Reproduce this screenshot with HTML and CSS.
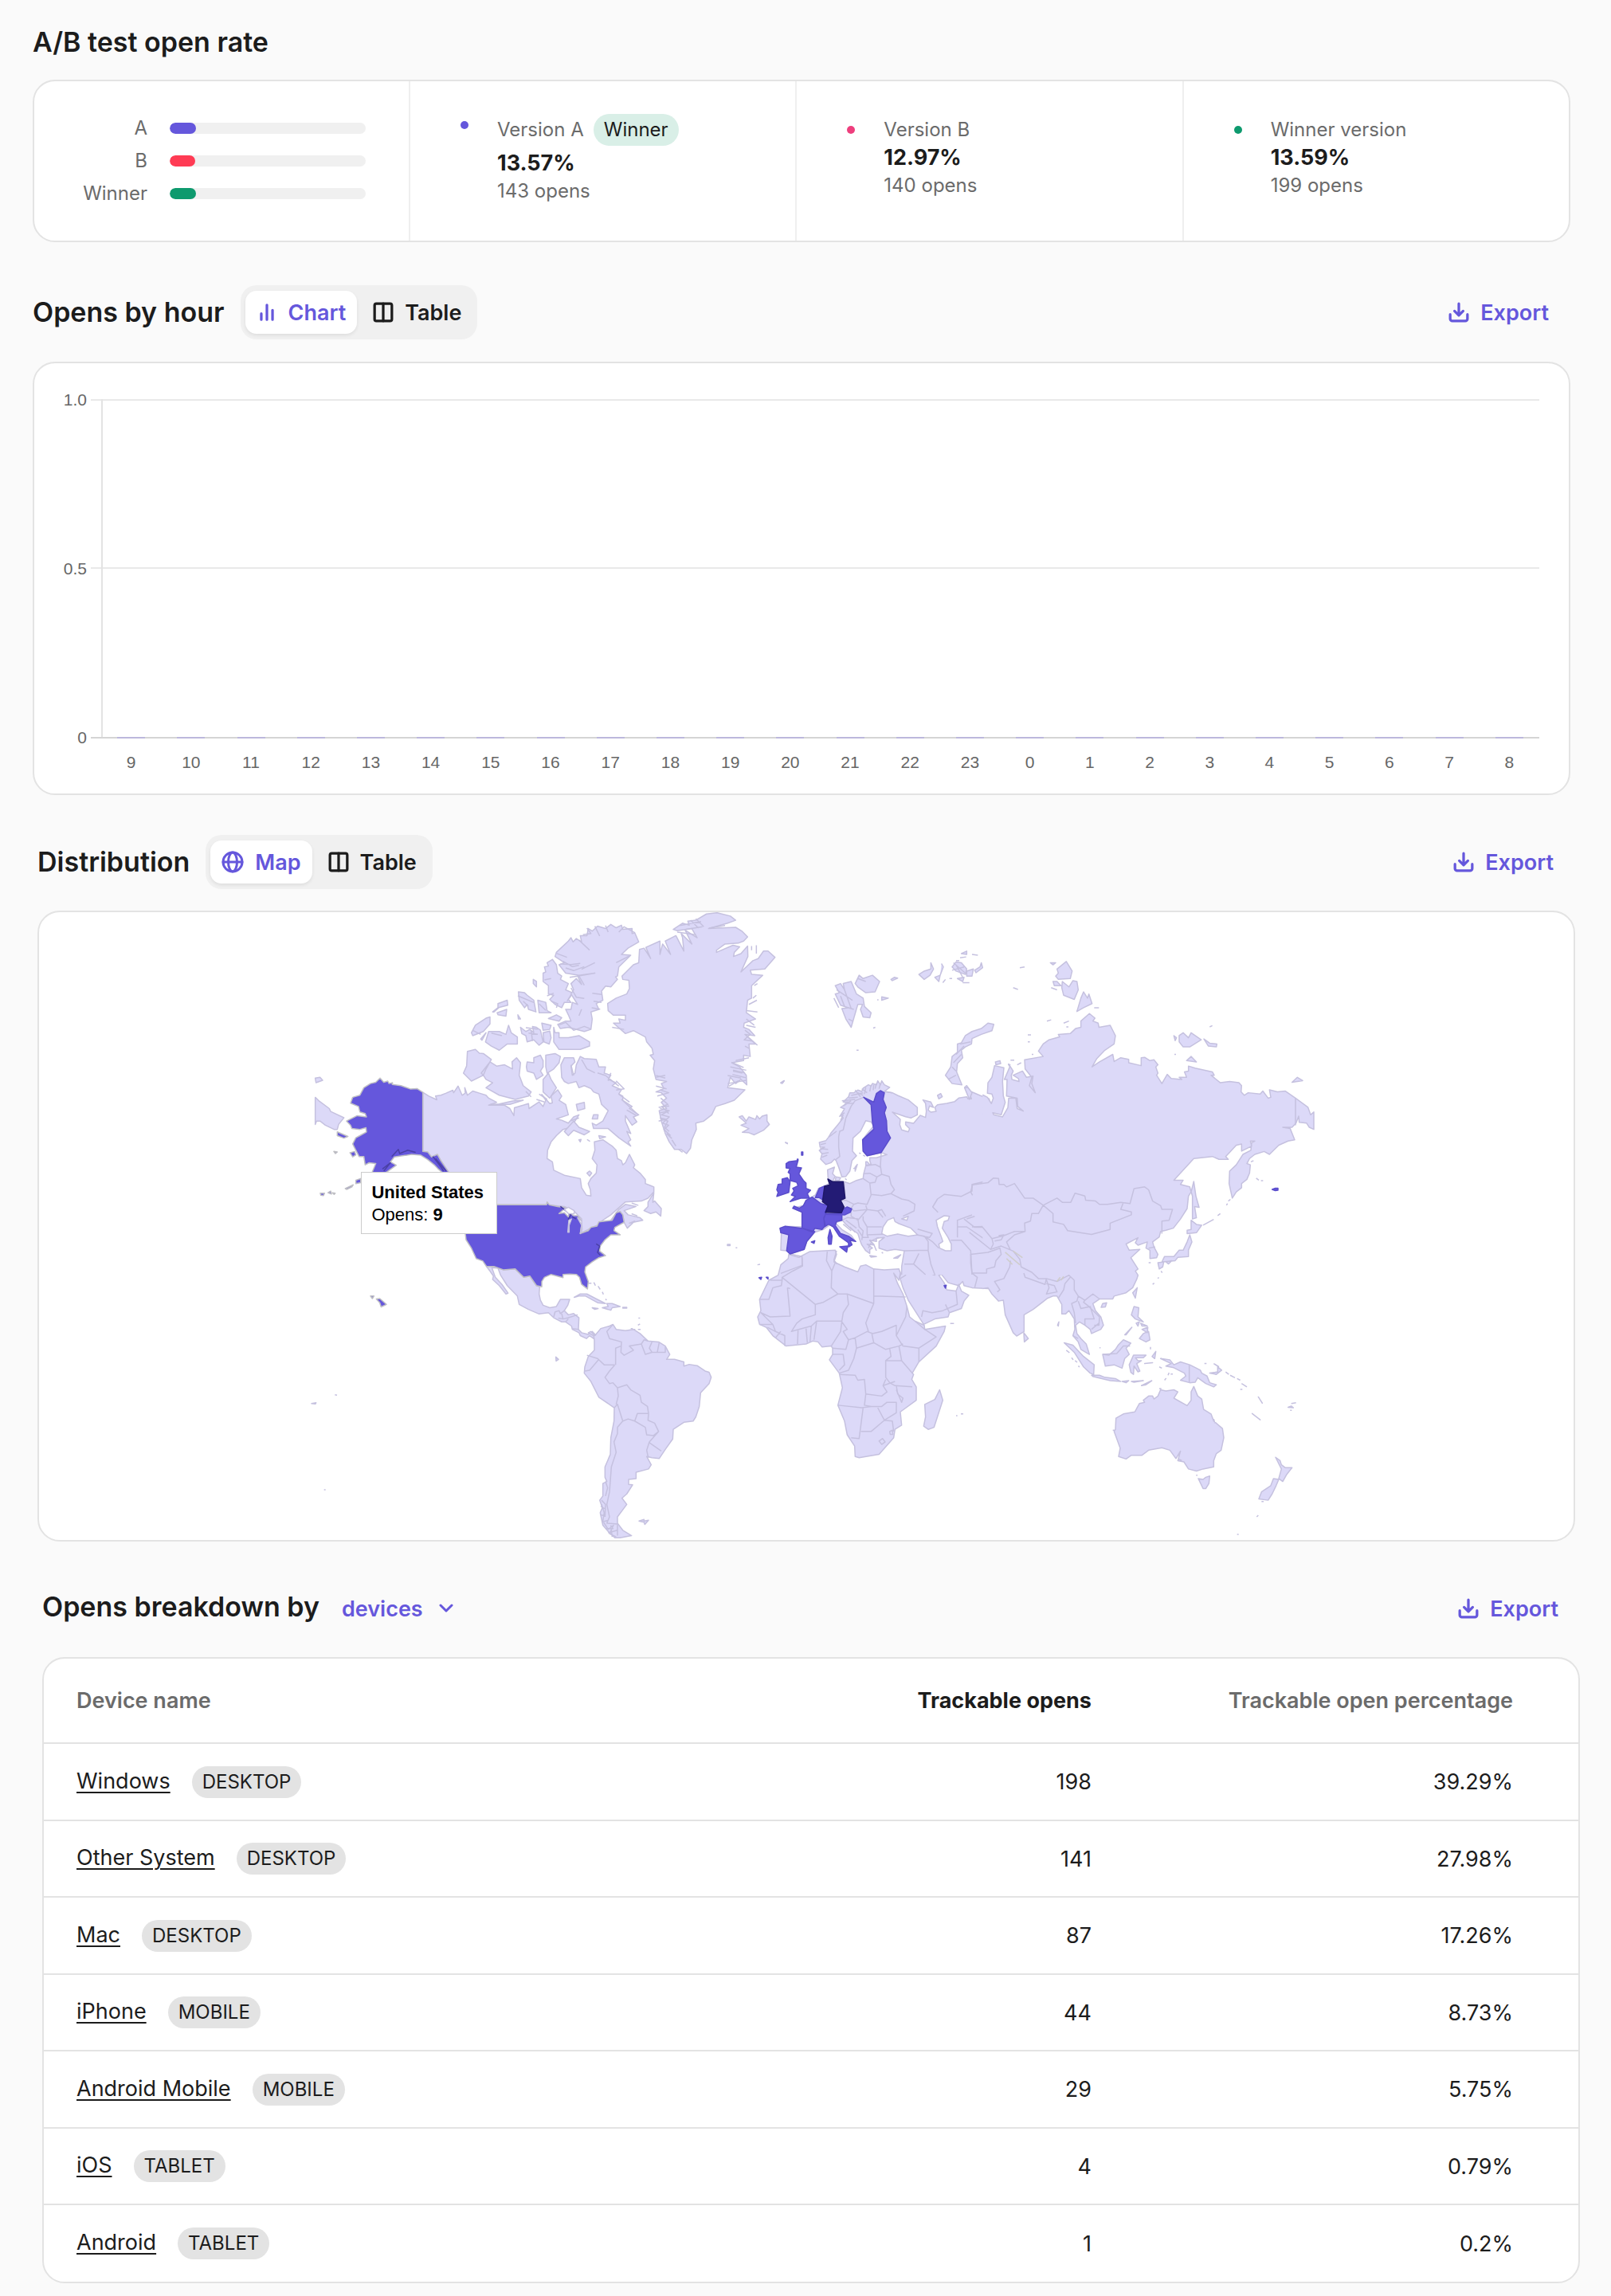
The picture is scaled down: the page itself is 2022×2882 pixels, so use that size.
FILE: index.html
```html
<!DOCTYPE html>
<html lang="en">
<head>
    <meta charset="UTF-8">
    <meta name="viewport" content="width=device-width, initial-scale=1.0">
    <title>Campaign report</title>
    <link rel="stylesheet" href="styles.css">
</head>
<body>

<!-- shared icons -->
<svg width="0" height="0" class="sprite" aria-hidden="true">
    <symbol id="icon-export" viewBox="0 0 24 24">
        <path d="M12 2v13M7 10.5l5 5 5-5M2 14.5v5a2.500 2.500 0 0 0 2.500 2.500h15a2.500 2.500 0 0 0 2.500-2.500v-5"/>
    </symbol>
    <symbol id="icon-table" viewBox="0 0 24 24">
        <rect x="2" y="2" width="20" height="20" rx="2"/>
        <path d="M12 2v20"/>
    </symbol>
    <symbol id="icon-chart" viewBox="0 0 24 24">
        <path d="M5.500 13.500v7M12 3.500v17M18.500 9.500v11"/>
    </symbol>
    <symbol id="icon-globe" viewBox="0 0 28 28">
        <circle cx="14" cy="14" r="12"/>
        <ellipse cx="14" cy="14" rx="5.500" ry="12"/>
        <path d="M2 14h24"/>
    </symbol>
</svg>

<section class="section">
    <h2 class="first-title">A/B test open rate</h2>
    <div class="card ab">
        <div class="ab-bars">
            <span>A</span><div class="bar"><div class="fill purple" style="width: 13.57%"></div></div>
            <span>B</span><div class="bar"><div class="fill red" style="width: 12.97%"></div></div>
            <span>Winner</span><div class="bar"><div class="fill green" style="width: 13.59%"></div></div>
        </div>
        <div class="ab-cell">
            <span class="dot purple high"></span>
            <div>
                <div class="ab-name">Version A <span class="winner">Winner</span></div>
                <strong>13.57%</strong>
                <div>143 opens</div>
            </div>
        </div>
        <div class="ab-cell">
            <span class="dot pink"></span>
            <div>
                <div>Version B</div>
                <strong>12.97%</strong>
                <div>140 opens</div>
            </div>
        </div>
        <div class="ab-cell">
            <span class="dot green"></span>
            <div>
                <div>Winner version</div>
                <strong>13.59%</strong>
                <div>199 opens</div>
            </div>
        </div>
    </div>
</section>

<section class="section">
    <div class="section-head hour-head">
        <h2>Opens by hour</h2>
        <div class="toggle">
            <button type="button" class="active"><svg class="icon"><use href="#icon-chart"/></svg>Chart</button>
            <button type="button"><svg class="icon"><use href="#icon-table"/></svg>Table</button>
        </div>
        <button type="button" class="export"><svg class="icon"><use href="#icon-export"/></svg>Export</button>
    </div>
    <div class="card chart">
        <div class="y-axis"><span>1.0</span><span>0.5</span><span>0</span></div>
        <div class="plot">
            <i></i><i></i><i></i><i></i><i></i><i></i><i></i><i></i><i></i><i></i><i></i><i></i>
            <i></i><i></i><i></i><i></i><i></i><i></i><i></i><i></i><i></i><i></i><i></i><i></i>
        </div>
        <div class="x-axis">
            <span>9</span><span>10</span><span>11</span><span>12</span><span>13</span><span>14</span>
            <span>15</span><span>16</span><span>17</span><span>18</span><span>19</span><span>20</span>
            <span>21</span><span>22</span><span>23</span><span>0</span><span>1</span><span>2</span>
            <span>3</span><span>4</span><span>5</span><span>6</span><span>7</span><span>8</span>
        </div>
    </div>
</section>

<section class="section map-section">
    <div class="section-head">
        <h2>Distribution</h2>
        <div class="toggle">
            <button type="button" class="active"><svg class="icon globe"><use href="#icon-globe"/></svg>Map</button>
            <button type="button"><svg class="icon"><use href="#icon-table"/></svg>Table</button>
        </div>
        <button type="button" class="export"><svg class="icon"><use href="#icon-export"/></svg>Export</button>
    </div>
    <div class="card map">
        <svg class="world" viewBox="0 0 1926 788" role="img" aria-label="Opens by country">
            <!-- north america -->
            <g transform="translate(331 -15) scale(.33333 .523)">
                <path d="M47 473L60 481 100 500 105 507 155 522 135 538 130 550 118 550 85 540 65 530 52 530 47 538ZM47 427L65 425 75 432 50 438ZM33 1208L50 1206 48 1209ZM121 1187l8 1M80 1415h6M953 1096l10 6-9 4Z"/>
                <path d="M452 461L475 470 505 479 500 470 520 468 540 463 565 456 568 462 585 446 600 468 612 463 610 450 620 468 640 458 665 463 690 468 700 475 730 485 700 492 760 492 780 500 795 517 797 498 830 492 850 488 852 500 890 484 905 495 915 480 900 466 930 488 940 486 935 470 960 455 975 470 965 480 990 490 1000 515 955 525 975 528 1000 535 1020 520 1040 515 1010 545 980 550 955 565 935 580 922 600 920 620 940 628 945 648 985 660 1045 668 1050 690 1068 708 1085 710 1083 695 1075 680 1085 668 1105 655 1108 635 1090 620 1100 600 1098 580 1130 575 1165 590 1180 600 1185 620 1200 625 1205 635 1215 630 1230 610 1250 635 1245 642 1270 655 1290 670 1290 680 1310 685 1322 688 1322 700 1300 715 1275 722 1215 724 1160 755 1130 768 1110 780 1090 785 1050 798 1050 765 1020 745 985 735 920 731 600 731 552 655 520 625 507 610 485 616 470 604 452 603Z"/>
                <path d="M1160 768L1190 742 1215 730 1255 735 1210 745 1225 755 1270 762 1280 768 1230 775 1250 770 1222 787 1210 773 1205 755 1195 747ZM1285 745L1300 735 1300 725 1322 702 1318 725 1325 722 1350 740 1348 758 1330 748 1310 752ZM1240 727L1262 732ZM1240 753L1258 757Z"/>
                <path d="M680 420L672 415 705 388 730 398 760 395 790 405 788 388 805 378 820 390 815 420 830 445 860 460 850 470 800 478 740 468 690 450 715 438 690 430ZM708 490L740 489 790 482 830 480 780 490ZM620 363L650 358 665 367 680 368 710 382 690 405 680 420 635 434 605 415 617 398ZM635 318L650 300 690 283 705 280 705 297 680 315 640 325ZM670 333L690 318 675 336ZM688 340L700 315 740 315 765 322 775 300 785 318 808 328 808 345 770 345 740 360 710 350ZM715 268L735 258 735 248 770 240 772 252 740 257 720 268ZM732 270L768 262 765 278 735 275ZM812 220L835 222 845 228 870 240 878 268 850 262 845 250 835 258 815 240ZM885 240L915 245 920 265 935 270 890 270ZM868 190L880 195 880 208 868 200ZM820 305L840 315 855 310 870 318 865 303 880 305 895 312 905 340 890 348 870 335 845 340 840 325 825 320ZM905 318L930 314 935 330 928 345 908 340ZM900 295L935 300 930 310 905 312ZM945 305L950 318 965 318 965 330 1000 330 1040 325 1080 340 1080 350 1045 358 1000 358 965 358 945 340ZM925 284L955 275 975 282 965 290ZM810 275L820 285 812 285Z"/>
                <path d="M905 175L915 172 910 160 925 158 920 150 940 142 955 155 960 175 975 182 970 190 1000 200 990 215 1015 222 1000 238 1010 245 985 245 975 258 950 250 930 238 945 228 925 225 925 205 905 195Z"/>
                <path d="M955 125L1000 98 1010 90 1018 100 1030 92 1050 100 1045 85 1070 85 1075 68 1090 74 1110 62 1140 68 1160 58 1180 66 1200 60 1205 70 1240 68 1240 80 1250 78 1265 100 1225 115 1200 130 1235 132 1190 160 1185 182 1178 184 1185 190 1160 208 1140 206 1125 218 1130 240 1105 248 1115 262 1085 268 1090 285 1085 310 1060 315 1000 305 970 308 960 298 990 290 1010 290 1000 275 990 262 1010 262 1015 245 1035 250 1010 225 1020 215 1010 200 1030 188 1050 202 1035 182 1100 175 1040 180 990 175 965 155 985 150 950 135Z"/>
                <path d="M842 400L845 388 870 390 870 378 895 372 905 385 905 400 895 410 905 420 880 430 870 415 845 410ZM915 372L950 368 970 375 965 390 945 405 920 415 915 400ZM905 430L925 415 935 430 955 450 930 475 905 460ZM972 395L985 378 1020 378 1025 388 1010 398 1015 420 1025 415 1030 395 1045 375 1060 380 1105 382 1115 400 1140 400 1135 415 1160 420 1150 430 1180 438 1165 445 1200 455 1190 465 1205 470 1205 480 1240 495 1230 500 1265 515 1245 520 1258 532 1240 540 1215 517 1215 530 1235 560 1220 555 1235 575 1225 580 1235 590 1190 570 1150 548 1095 548 1090 535 1105 540 1130 530 1150 505 1125 490 1115 465 1095 460 1085 452 1060 445 1040 450 1030 435 1000 440 985 435 975 425ZM985 555L1020 530 1040 545 1080 555 1060 563 1020 552 1000 565ZM1030 490L1060 485 1062 500 1035 505ZM1095 515L1112 515 1110 525 1090 525ZM1070 655L1080 650 1088 655 1080 662ZM1040 575L1048 574 1045 580ZM1072 575L1080 578ZM1118 572L1140 568 1115 565Z"/>
                <path d="M692 879L720 879 755 887 800 885 832 905 855 902 880 925 892 928 890 945 895 960 905 972 930 978 955 975 970 958 1005 958 998 972 985 985 1000 995 1020 992 1040 1002 1038 1030 1050 1038 1075 1042 1090 1035 1105 1045 1095 1052 1080 1045 1068 1052 1045 1045 1040 1038 1015 1030 1012 1022 990 1012 975 1012 945 1002 925 990 890 993 850 982 815 970 808 950 770 925 745 900 735 883 712 882 725 905 750 922 773 943 765 945 740 925 715 910 718 902 705 890Z"/>
                <path class="line" d="M945 1000L950 988 965 985 970 992 985 985M975 992L980 1005 962 1003M980 1005L1000 1002 1035 995M990 1012L1000 1005M1015 1028L1040 1030"/>
                <path d="M1022 953L1045 945 1070 945 1100 955 1140 968 1110 966 1065 950 1040 950ZM1128 978L1150 975 1145 968 1165 968 1195 975 1165 978 1160 984ZM1090 978L1112 980 1100 982ZM1205 977h15v2h-15ZM1075 919h12M1096 917l6 8M1112 926l8 8M1128 940l4 6M1140 957l4 3M1264 1003h6M1262 1020l8-3M1235 1028h8M1262 1030h10M1248 1030h4"/>
                <!-- united states -->
                <g class="us">
                    <path d="M291 427L305 437 320 434 325 440 338 438 337 442 370 445 405 453 430 452 452 461 452 603 470 604 485 616 507 610 520 625 552 655 525 653 510 645 495 635 470 622 445 612 410 610 380 613 345 616 330 628 352 636 310 655 260 655 275 632 250 630 235 635 230 615 212 615 200 600 188 585 200 570 215 565 240 556 238 546 215 550 185 548 180 540 165 530 205 517 240 520 235 512 215 508 210 495 180 487 188 473 215 468 230 450 255 440 275 437Z"/>
                    <path d="M130 556L170 567 155 571 130 565ZM117 603L130 604 123 608ZM178 606L195 603 200 611 188 616ZM160 692L190 683 185 688 165 694ZM200 672L218 668 218 678 200 680ZM66 703L82 703 78 709 68 708ZM95 702L105 698 108 705ZM112 702L122 703 118 706ZM255 950L268 950 262 956ZM277 957L290 956 315 970 295 976 290 966Z"/>
                    <path d="M600 731L918 731 920 724 928 731 960 735 990 738 965 752 985 750 1000 760 1003 750 1020 757 1035 757 1048 768 1050 780 1045 800 1075 793 1085 785 1108 782 1115 772 1165 768 1180 750 1195 747 1205 755 1210 773 1175 785 1172 793 1195 803 1160 803 1138 815 1120 830 1118 842 1140 853 1115 858 1090 868 1065 880 1062 892 1075 915 1072 933 1050 922 1042 905 1030 898 1005 897 980 898 980 906 935 898 910 905 900 915 900 928 880 925 855 902 832 905 800 885 755 887 720 879 692 879 678 866 653 860 635 835 615 815 612 800 600 780Z"/>
                    <path class="line" d="M335 615L360 598 365 608 395 600 425 605M300 645L330 630 305 650M490 615L520 640 530 650M500 620L540 650M970 735L1010 755 1000 765 1005 775M1105 825L1118 830 1110 845 1120 852M1015 760L1030 765"/>
                </g>
                <path class="lake" d="M985 742L1000 737 1022 745 1022 753 1000 752ZM998 797L1002 768 1012 765 1003 780 1003 797ZM1035 762L1050 770 1052 790 1045 800 1050 780Z"/>
            </g>
            <!-- south america, greenland, africa, arabia -->
            <g transform="translate(691 -15) scale(.33333 .523)">
                <path d="M88 1018L100 1030 135 1033 165 1030 190 1040 220 1058 260 1060 285 1070 302 1090 290 1102 320 1102 355 1108 355 1118 375 1114 405 1117 435 1130 450 1133 458 1145 450 1160 418 1182 413 1215 400 1240 390 1250 355 1253 315 1270 313 1293 285 1318 262 1340 235 1338 215 1335 232 1355 222 1365 175 1373 175 1388 147 1390 147 1402 162 1403 140 1425 122 1435 140 1450 105 1480 105 1495 125 1512 158 1525 115 1530 95 1530 70 1515 50 1500 40 1470 48 1458 38 1440 50 1430 50 1400 65 1395 58 1385 58 1360 78 1330 80 1290 92 1250 93 1218 35 1193 5 1155 -20 1135 -18 1120 -5 1095 18 1080 18 1055 15 1045 -5 1038 5 1035 20 1045 42 1028 75 1022Z"/>
                <path class="line" d="M88 1018L65 1035 75 1052 120 1060 118 1085 130 1092 165 1080 150 1070 195 1065 205 1055 220 1058M118 1070L98 1075 98 1115M195 1065L210 1090 235 1085 285 1085 285 1072M235 1060L225 1075 235 1085M262 1062L255 1085M-10 1092L30 1100 55 1115 95 1115M-18 1130L0 1128 35 1102M95 1115L75 1130 58 1145 75 1160 88 1158 105 1170 140 1163 155 1175 190 1188 195 1205 218 1215 222 1232 180 1232 170 1250 145 1245 125 1250 105 1210 93 1218M105 1170L108 1190 100 1210M222 1232L220 1248 245 1255 260 1275 240 1285 215 1283 210 1265 170 1250M260 1275L225 1300 215 1320 220 1335M225 1302L270 1322M125 1250L105 1265 105 1280 92 1300 100 1325 82 1360 75 1420 65 1450 75 1480 65 1495 105 1497 105 1525M45 1450L55 1470 50 1490 70 1510 90 1500 75 1520 100 1528M45 1440L60 1450 58 1480M60 1395L68 1410 60 1430M42 1455L62 1462M42 1475L60 1478M48 1492L72 1488M60 1508L90 1508M70 1518L105 1512M80 1500L85 1528"/>
                <path d="M186 1490L205 1486 205 1490 222 1488 208 1498 205 1493Z"/>
                <path d="M188 118L205 115 230 140 212 113 265 98 265 130 275 105 305 130 285 98 325 85 355 122 350 90 345 80 385 105 360 72 405 90 385 68 330 73 315 70 350 55 375 60 370 50 400 48 440 33 480 30 530 38 550 48 520 55 448 68 550 65 575 75 595 88 580 98 560 103 510 105 478 120 478 125 540 108 565 112 545 125 542 135 570 128 595 110 596 135 570 172 615 145 635 140 655 122 672 122 698 137 660 165 605 168 610 178 652 180 610 205 610 235 595 240 590 270 625 285 582 295 580 305 600 310 622 325 585 322 625 345 600 345 605 375 580 372 580 385 535 390 565 400 590 420 592 443 570 430 550 440 530 425 520 450 585 455 545 480 510 488 475 495 460 515 430 530 400 535 402 550 385 575 380 595 365 608 345 598 320 598 300 580 285 560 270 530 262 505 290 500 270 485 290 475 270 462 250 460 280 452 270 440 290 435 250 430 240 405 245 385 228 372 240 370 235 355 215 340 210 328 165 313 135 320 90 295 115 295 110 285 135 288 135 276 90 276 70 265 68 248 100 235 140 225 150 212 148 192 125 190 122 182 165 155 185 150Z"/>
                <path class="line" d="M265 500L300 505 270 515 300 520 275 535 298 540 280 550 305 565M250 425L285 420M255 470L298 462 265 455M260 530L290 525M590 285L620 300M600 250L630 240M615 235L628 228M590 265L632 268M550 385L600 378M520 440L590 432M540 410L575 415M600 330L632 348M590 300L625 305M610 110v10M628 108v20M620 205l12-5M310 575L325 590M335 598L350 605M85 305L130 310M268 475L295 490 272 495 298 512M270 525L295 530 282 545 300 555M290 560L310 572M530 400L590 408M538 418L588 426M585 312L605 322 582 335 615 338M585 350L602 356"/>
                <path d="M563 520L575 517 590 530 600 520 625 526 630 517 640 525 650 518 668 515 668 530 677 538 655 552 620 563 600 558 575 557 600 548 570 540 590 535ZM720 438L733 433 725 440ZM738 581L745 583ZM519 826h10v3h-10ZM550 834h6M632 875l10-1"/>
                <path d="M925 205L945 200 960 215 955 200 985 195 1005 225 1030 235 1035 255 1060 270 1055 282 1030 280 1020 262 1028 250 1010 250 985 305 965 285 950 260 975 258 945 252 925 225 940 222ZM1000 200L1015 180 1030 188 1065 180 1092 195 1075 220 1040 222 1010 208ZM1135 190L1148 185 1160 187 1140 193ZM1100 232L1125 235 1100 240ZM1083 239h5M1068 307l8-2M1005 360h8"/>
                <path class="line" d="M930 215L990 240M945 230L960 255M960 215L985 260M975 258L995 262M975 285L990 290M1010 188L1040 195M920 235L938 258"/>
                <!-- africa -->
                <path d="M750 850L788 857 830 843 925 840 930 850 920 868 960 880 1010 892 1020 878 1040 875 1070 885 1110 887 1165 885 1170 895 1165 912 1145 895 1160 920 1180 945 1195 975 1205 1000 1225 1010 1260 1020 1262 1030 1340 1022 1335 1035 1305 1070 1240 1108 1215 1135 1220 1138 1213 1150 1230 1168 1230 1200 1170 1228 1175 1260 1150 1270 1145 1290 1090 1330 1015 1338 1000 1335 998 1310 970 1283 960 1250 935 1212 952 1170 940 1135 903 1103 915 1090 915 1075 910 1070 875 1072 860 1060 840 1058 815 1065 740 1070 690 1045 665 1025 640 1018 633 1000 645 985 640 958 675 912 710 900 720 875 748 860Z"/>
                <path class="line" d="M800 858L802 878 765 890 725 905 725 912 680 912M895 843L892 865 912 890 925 870M912 890L910 930 935 945M725 905L850 970 880 965 935 945 970 945M640 958L675 958 690 930 722 925 725 912M745 930L755 998 680 1000 645 990 690 1018 640 1018M850 970L850 995 800 1005 780 1015 760 1035 835 1022 855 1010 950 1010 955 990 975 970 970 945 1070 968M745 930L755 932M1070 885L1070 968 1055 990 1040 1015 1050 1035M1070 950L1190 952M855 1010L845 1055M950 1010L945 1035 910 1070M950 1012L970 1030 955 1035 975 1055 1000 1050 1045 1035 1065 1040 1100 1035 1155 1020 1155 1045M975 1055L965 1078 915 1075M1062 1038L1070 1062 1115 1078 1165 1070 1180 1065M1000 1050L1005 1075 1070 1062M1195 975L1190 1000 1155 1045 1180 1070 1240 1075 1305 1048 1262 1030 1225 1010M1240 1075L1240 1108M1165 1070L1175 1105 1215 1135M1130 1076L1135 1095 1115 1105 1175 1105M1115 1105L1115 1145 1130 1158 1150 1165 1215 1168M1005 1075L995 1100 975 1128 940 1135M940 1138L1000 1140 1010 1152 1035 1150 1040 1185 1100 1190 1120 1180 1105 1165 1115 1150M915 1090L955 1090 960 1115 940 1128M1040 1185L1035 1212 1060 1215 1100 1215 1120 1205 1155 1205 1155 1230 1110 1248 1085 1218M935 1212L1025 1218 1060 1215M1030 1218L1015 1292 985 1290M1022 1275L1060 1275 1110 1248 1140 1250 1145 1275M1155 1165L1160 1185 1180 1195 1175 1205 1155 1175M1105 1165L1150 1155M815 1028L820 1062M785 1030L783 1065M835 1022L830 1060M735 1070L735 1045 700 1035 670 1025M690 1018L700 1035M700 1050L720 1035M1090 1298L1103 1292 1113 1300 1100 1306ZM1130 1275L1140 1272 1142 1282 1132 1282Z"/>
                <path d="M1318 1175L1330 1200 1297 1265 1275 1270 1258 1262 1265 1240 1262 1210 1300 1198ZM1380 1237h5M1398 1233h9M1358 1016h14"/>
                <!-- arabia and iran -->
                <path d="M1500 860L1190 860 1180 872 1175 890 1168 905 1180 930 1200 960 1225 985 1245 1005 1258 1018 1300 1005 1350 1000 1355 990 1400 980 1410 962 1428 948 1400 938 1390 922 1380 938 1345 935 1335 918 1315 900 1325 898 1350 918 1390 925 1405 915 1410 925 1440 930 1500 932Z"/>
                <path class="line" d="M1170 908L1190 900 1185 885 1225 880 1300 900M1240 842L1225 880M1250 1000L1255 985 1290 990 1330 985 1385 970 1380 938M1340 970L1355 990M1310 890L1300 900"/>
                <path class="hot" d="M1335 925L1343 924 1340 931ZM638 906L648 905 645 910ZM665 905L672 905 672 909Z"/>
            </g>
            <!-- arctic fjords -->
            <g transform="translate(511 5) scale(.33333)">
                <path class="line" d="M430 180L470 182 505 178M440 170L475 190 500 185M450 195L480 205 520 190M415 140L455 155M500 90L540 128M560 38L578 75M515 70L545 65 530 45M600 35L610 60M650 60L670 40 710 62M640 175L690 150M510 200L560 175M465 230L500 225 520 260M470 270L490 305 520 310M455 320L470 300M380 300L405 290M370 240L395 235M395 320L420 330 415 345M550 290L585 295M555 320L585 325M548 345L580 350M425 410L450 400 480 430 520 415 545 425M500 375L510 350M300 420L345 425M310 440L345 445M320 430L325 470M170 440L210 450M100 430L130 445M270 300L330 325M290 320L310 340M350 330L375 355M600 600L650 640M620 590L610 620M640 620L670 650 640 655M660 690L720 745M680 730L715 750M650 670L690 700M570 590L600 600M510 540L530 575 560 590M470 560L480 600M880 35L960 20M900 50L965 40M920 15L950 45M940 10L970 40M870 60L940 70M990 45L1050 35M1075 550L1120 570M1080 580L1125 590M1060 600L1110 610M1065 640L1100 620M790 600L825 610M790 640L830 650M800 720L840 715M805 740L835 735M805 760L830 765M350 670L380 690M340 690L370 700M300 660L320 680M470 770L500 760"/>
            </g>
            <!-- europe -->
            <g transform="translate(891 195) scale(.33333)">
                <path d="M905 780L905 118 870 105 835 90 820 68 812 75 830 95 838 118 825 118 820 110 790 115 775 128 745 135 710 140 700 150 705 165 685 168 675 160 680 145 695 150 685 130 655 122 665 135 668 165 665 188 645 180 620 210 590 205 590 215 605 230 600 242 575 235 568 215 570 195 540 168 590 185 610 190 634 178 634 150 600 122 560 105 540 95 510 90 530 75 510 65 500 50 495 65 485 50 480 65 465 60 460 70 450 65 430 78 425 90 410 85 395 95 380 95 375 110 355 130 375 130 345 150 360 155 345 180 355 190 335 215 310 245 300 262 290 275 265 282 268 300 285 300 265 312 275 325 270 345 290 365 310 358 322 345 328 350 338 375 350 412 365 410 380 390 388 350 405 332 390 315 392 265 420 240 440 200 460 205 470 220 445 250 428 272 430 315 445 332 498 320 520 328 480 340 455 340 455 350 460 365 440 370 432 400 430 418 405 425 380 437 358 430 325 430 302 425 298 415 296 385 322 375 315 400 325 410 315 428 287 445 262 455 250 480 228 492 205 520 165 530 200 545 200 600 135 598 117 605 122 625 120 688 142 690 155 702 208 685 218 655 248 620 280 610 305 592 318 600 345 635 375 660 378 675 388 665 378 650 402 655 385 632 350 610 325 585 352 575 365 590 385 608 410 625 418 650 425 668 440 690 455 700 455 685 465 680 445 665 470 668 455 650 480 655 480 643 510 640 490 655 490 680 520 690 550 685 585 690 580 720 575 750 575 780"/>
                <path class="line" d="M325 348L342 335 338 300 338 260 342 240 355 235 365 190 385 145 400 125 432 112 460 140M540 95L510 90M510 170L517 150M498 320L495 370 500 402 528 410 535 440 548 460 535 475 575 495 600 500 625 515 622 540 580 560M440 370L475 365 495 375M432 400L455 398 482 412 500 402M430 418L455 435 475 432 482 412M358 433L362 490 345 500 365 500 395 515 410 510 445 515 460 480 455 435M460 478L500 482 535 475M395 515L385 530 395 540 445 535 440 520M385 545L385 560 410 575 445 535 485 540 505 565M430 560L430 575 445 600 500 600M350 575L370 565 410 570 415 600 430 615 425 650M445 600L445 630 505 628M485 540L500 535 515 560M365 575L385 590 405 605M410 610L430 640 450 640 445 630M905 425L840 440 840 465 800 485 735 478 710 495 692 525 712 545M635 608L690 625 680 640 655 635M620 628L660 635 675 655 675 690M660 635L690 655 715 680M585 690L675 688M585 740L620 740 640 700M620 740L665 780M675 690L685 740 700 780M760 650L800 650 835 690 840 780M785 640L785 575 840 555M785 600L820 600 900 655M840 600L905 598M820 570L850 560M330 690L320 725 332 740M155 702L200 712 200 745 120 775"/>
                <path class="line" d="M350 125L400 120M355 145L385 125M340 185L360 170M385 105L430 95M400 85L420 110M440 75L435 100M460 65L455 90M480 60L475 80M495 60L490 80M300 262L330 240M270 290L290 285M275 325L300 320M268 305L298 308M275 338L295 330M345 200L355 178M360 135L395 135M375 115L410 112M410 95L430 105M425 80L445 95M470 65L468 85"/>
                <path class="lake" d="M505 600L522 575 545 565 550 580 565 588 610 605 635 630 600 635 560 627 520 635 500 625ZM575 570L600 560 595 575ZM705 575L735 558 755 560 750 575 735 580 728 605 750 640 762 665 762 690 740 690 718 680 715 665 730 655 725 640 710 600Z"/>
                <path d="M328 412L345 415 340 425 325 425ZM400 375L408 365 400 390ZM395 380L400 378ZM440 355L445 355 455 365 440 368ZM710 105L722 98 728 110 715 118ZM455 708L480 712 460 714ZM545 718L572 705 560 718ZM120 58L132 50 128 57ZM138 283L145 287ZM362 418l6 5M415 322l6 2M430 330l8 4"/>
                <path class="line" d="M455 650L470 665 480 690M460 660L450 680M490 640L465 650M500 695L505 700M380 600L400 620M355 590L385 615"/>
                <path class="hot" d="M150 355L185 350 178 375 198 378 188 400 205 425 215 435 215 455 232 462 220 475 228 492 195 492 155 505 175 485 160 480 170 465 165 455 185 445 180 432 155 425 155 400 148 395 155 380 140 378 140 362ZM125 420L145 415 155 430 150 470 105 485 110 470 105 460 110 440 125 438ZM198 318L203 318 203 330 198 330ZM182 345h3v6h-3Z"/>
                <path class="hot" d="M238 488L270 512 298 520 290 545 282 570 288 595 275 610 248 605 240 620 200 605 200 545 165 530 170 522 190 530 205 520 215 500ZM117 605L135 598 200 605 248 618 218 655 208 685 155 702 142 690 150 630 120 622ZM282 565L290 550 350 552 350 575 330 580 325 595 345 625 375 635 402 655 380 650 388 668 375 675 375 660 340 635 318 600 300 590 285 600ZM342 675L372 672 368 695ZM305 610L313 635 310 665 300 665 298 640ZM235 657L248 652 245 662ZM348 548L355 532 370 525 387 532 382 545 360 555 290 553ZM265 455L287 445 285 480 278 498 265 490 250 490ZM432 112L470 130 480 98 495 87 510 95 505 120 517 150 510 170 518 200 520 240 533 265 498 320 445 332 430 315 428 272 470 232 465 205 460 140Z"/>
                <path class="hottest" d="M297 420L315 430 355 430 362 492 345 500 358 525 348 547 288 545 298 520 277 505 285 447 305 442Z"/>
            </g>
            <!-- asia and oceania -->
            <g transform="translate(1131 -15) scale(.33333 .523)">
                <path d="M160 467L178 473 193 488 200 475 195 465 178 463 180 438 195 425 205 397 240 402 235 435 238 470 245 485 230 515 198 510 202 515 235 520 255 498 258 475 285 475 290 500 313 506 292 495 290 475 250 470 252 430 242 430 262 400 258 393 275 410 268 420 270 430 297 435 295 428 275 420 310 410 325 425 350 422 345 440 358 462 336 445 345 425 320 405 318 383 388 375 370 362 388 345 410 335 450 328 445 322 490 320 510 308 530 305 530 290 562 272 583 283 575 290 595 295 598 305 640 300 660 325 655 345 620 360 590 380 572 400 600 388 650 370 655 387 680 378 710 382 710 390 757 397 757 378 770 377 790 385 805 383 820 395 812 400 820 415 815 420 835 440 855 418 870 428 910 430 900 425 928 425 920 412 935 410 935 398 960 403 1025 412 1032 420 1020 420 1055 438 1090 435 1125 438 1135 445 1133 460 1145 468 1160 462 1205 465 1215 458 1235 475 1245 473 1240 455 1270 460 1300 458 1338 475 1385 497 1395 515 1407 508 1407 550 1390 545 1380 535 1352 533 1350 518 1340 535 1325 545 1290 545 1318 548 1335 575 1310 578 1275 588 1240 610 1220 603 1185 610 1165 620 1155 632 1168 635 1165 655 1155 670 1135 680 1135 690 1115 700 1100 715 1088 680 1090 650 1115 635 1140 610 1170 600 1173 582 1185 578 1168 578 1173 590 1135 602 1135 585 1115 588 1090 605 1075 615 1085 622 1050 622 1025 615 955 620 880 672 915 672 905 682 940 688 945 700 935 710 930 740 905 765 878 787 850 792 830 795 825 808 800 820 805 832 820 850 815 858 790 860 790 840 775 835 780 820 745 828 735 822 745 810 700 825 712 840 752 838 718 858 735 875 745 885 735 890 745 900 740 910 725 930 700 942 655 950 650 957 600 957 575 968 585 985 605 1000 615 1020 605 1030 570 1040 565 1030 545 1020 525 1012 510 1020 515 1040 530 1052 550 1065 562 1090 530 1078 520 1060 500 1045 507 1030 505 1005 485 985 472 993 458 993 458 970 440 950 425 950 405 955 385 965 350 982 316 995 316 1035 288 1046 275 1038 245 995 238 960 220 962 195 945 180 930 160 932"/>
                <path class="line" d="M122 708L115 700 122 683 180 678 200 667 220 668 222 682 240 682 250 688 280 680 318 715 350 715 388 732 440 715 460 725 492 725 508 703 545 710 548 720 585 722 600 730 630 730 680 725 715 728 730 692 770 688 785 695 800 722 830 733 835 742 875 742 862 768 835 770 835 800M388 732L425 752 425 772 465 778 480 793 570 802 640 790 640 775 720 755 720 748 680 742 690 725M388 732L370 752 345 752 340 770 318 775 320 795 280 803 250 820 265 840M90 765L130 785 160 785 195 812 240 805 280 795 320 795M110 797L190 838 200 825 195 812M190 838L230 830 275 842 300 862 305 880 345 893 370 908 400 908 440 915 485 900 505 912M115 850L180 845 225 835 230 850 210 865 205 880 175 885 175 895 120 895 115 870ZM120 895L140 905 130 930M265 865L262 880 240 908 205 915 225 935 215 940M315 895L320 905 395 922 400 908M400 910L410 930 400 945 440 940 430 925 400 920M505 912L505 935 520 950 515 962 495 968 505 990 510 1015M490 905L470 920 465 935 445 955M520 950L545 960 575 945 600 957M545 960L540 965 560 975 600 1000 598 1020 580 1020M520 962L530 980 565 975 580 1005 545 1005 545 1020M570 1030L598 1015M785 835L810 832M500 1045L520 1052M220 805L240 803 230 815 205 818M1338 475L1338 540"/>
                <path class="disputed" d="M245 845L300 875M250 860L272 874M275 842L310 858M440 915L452 905M455 912L465 903"/>
                <path d="M315 1038L332 1052 317 1060ZM606 977L612 968 627 966 622 976ZM725 942L742 930 735 955ZM442 1020L447 1012 445 1022ZM955 675L963 710 975 737 958 735 965 762 950 765 950 710 945 700ZM945 768L965 778 985 780 965 798 930 800 930 792 945 790ZM940 803L948 820 935 840 935 855 895 857 885 865 835 868 845 855 880 855 900 840 915 840 930 820ZM820 870L842 868 838 880 825 885ZM850 868L872 865 860 873ZM990 780L1030 766M1045 757L1055 752M1078 732l4-4M1085 722l8-4M832 890l4 4M820 908l3-3M800 922l6-3M785 870h8"/>
                <path d="M467 1062L500 1068 540 1095 580 1115 578 1138 565 1135 540 1120 505 1085ZM570 1140L600 1140 620 1145 660 1148 680 1155 640 1153 575 1143ZM612 1090L635 1092 660 1078 670 1068 690 1055 718 1063 700 1075 712 1090 695 1100 685 1123 655 1115 622 1118ZM712 1115L728 1092 775 1092 765 1098 735 1098 745 1105 758 1105 740 1112 752 1130 745 1132 730 1118 728 1138 718 1133ZM720 995L730 975 748 978 745 1000 765 1012 735 1005ZM750 1052L765 1040 785 1035 790 1055 775 1060ZM738 1015L750 1012 745 1022ZM755 1015L780 1022 760 1022ZM760 1030L782 1025 780 1038ZM695 1043L722 1025 700 1043ZM685 1155L710 1153 700 1158ZM720 1155L765 1153 730 1157ZM758 1165L797 1153 775 1163ZM798 1095L812 1083 808 1100ZM770 1112L800 1110ZM825 1120L835 1123M845 1152l6-5M858 1140l4-6M868 1137h8M600 1074h4M792 1072v6M475 1080l12 6M495 1098l6 5M508 1105l8 4M520 1118l5 2"/>
                <path d="M830 1100L865 1103 880 1115 905 1108 940 1115 980 1128 985 1135 1005 1142 1015 1158 1040 1163 1030 1168 1000 1160 970 1146 960 1157 940 1158 905 1152 925 1142 920 1135 880 1122 850 1118 870 1112ZM1015 1135L1045 1132 1045 1120 1060 1128 1040 1138ZM995 1112h8M1030 1112L1050 1120M1075 1132l12 6M1092 1140l18 6M1118 1148l12 4M1135 1160l20 8M1130 1174h8M1198 1192L1213 1207ZM1175 1232L1205 1247ZM1310 1217L1322 1214 1330 1218ZM1322 1208L1340 1206M1318 1224h6"/>
                <path class="line" d="M612 1090L665 1088 690 1070 715 1070M938 1115L938 1158"/>
                <path d="M662 1243L690 1233 733 1228 750 1208 770 1205 765 1200 785 1190 800 1190 805 1197 820 1190 830 1175 850 1178 880 1175 895 1180 880 1195 930 1213 945 1200 945 1180 955 1167 970 1190 985 1197 992 1222 1020 1233 1030 1250 1063 1268 1068 1290 1058 1320 1040 1328 1030 1345 1030 1360 990 1365 965 1370 935 1365 918 1348 895 1345 905 1322 888 1340 865 1320 835 1314 785 1320 760 1332 720 1332 700 1341 672 1335 678 1315 655 1275 660 1270ZM972 1388L990 1390 1000 1385 1015 1382 1012 1400 1000 1412 990 1412ZM1263 1337L1280 1345 1285 1355 1300 1362 1325 1362 1305 1378 1290 1395 1275 1388 1285 1365ZM1255 1388L1275 1390 1265 1405 1250 1425 1235 1440 1200 1437 1210 1420 1245 1405ZM1210 1443h8M1192 1480l6-4M1118 1522h6M964 1380h5M895 1340L910 1345M1030 1245L1035 1255M650 1272h6M825 1172h8"/>
                <path d="M475 147L497 170 490 188 445 190 435 182 445 175 440 165ZM460 195L485 208 500 193 515 195 520 215 505 238 465 228 458 210ZM515 267L530 235 540 220 555 235 560 225 572 248 540 258ZM425 195L440 195 455 205 430 205ZM418 210L440 215M415 150L435 150 425 155ZM580 258h18M900 325L915 318 935 330 945 318 983 335 940 352 915 352 900 340ZM993 333L1015 343 1042 345 1040 352 1010 350ZM928 385L945 375 965 388ZM1325 437L1345 425 1365 433ZM880 325L890 330 885 337ZM882 370h6M1015 304l10-3M208 388L225 385 228 392 210 395ZM300 162L318 160M275 210L293 214M402 290L418 287M465 295L485 290M330 323h12M330 340h8M345 370h6M255 395h10M265 384h14M290 395L305 390M475 304h8M1170 628L1180 625M1190 667L1200 672M1208 673h8"/>
                <path d="M20 420L40 400 45 375 65 365 65 345 80 342 95 325 120 315 155 308 180 295 202 298 195 313 155 322 120 332 118 345 95 352 80 360 85 378 65 392 62 412 82 443 45 440ZM92 450L105 450 120 462 110 478ZM45 160L60 148 80 150 100 165 95 178 60 170ZM65 188L90 185 85 195ZM100 170L125 165 120 182 100 182ZM130 168L150 160 155 150 160 162 135 174ZM80 128L100 122 100 130ZM75 138L98 136M120 130L142 132M60 145h12M-80 178L-60 170 -35 165 -35 150 -25 165 -38 180 -60 190ZM-20 185L0 180 -5 195ZM5 152L12 160 0 180M10 198L20 190M85 198h25M35 188h10"/>
                <path class="line" d="M30 430L60 420M50 390L80 370M60 370L90 350M75 345L115 340M45 400L60 410M50 150L95 175M45 168L90 160M60 155L85 185"/>
                <path class="hot" d="M1250 694L1262 691 1272 691 1272 696 1262 697Z"/>
            </g>
        </svg>
        <div class="tooltip"><b>United States</b><br>Opens: <b>9</b></div>
    </div>
</section>

<section class="section table-section">
    <div class="section-head">
        <h2><label for="breakdown">Opens breakdown by</label></h2>
        <div class="picker">
            <select id="breakdown"><option>devices</option></select>
            <svg class="chevron" viewBox="0 0 18 12"><path d="M2 2l7 7 7-7"/></svg>
        </div>
        <button type="button" class="export"><svg class="icon"><use href="#icon-export"/></svg>Export</button>
    </div>
    <div class="card">
        <table>
            <thead>
                <tr><th>Device name</th><th class="num sorted">Trackable opens</th><th class="num">Trackable open percentage</th></tr>
            </thead>
            <tbody>
                <tr><td><a href="#">Windows</a><span class="tag">DESKTOP</span></td><td class="num">198</td><td class="num">39.29%</td></tr>
                <tr><td><a href="#">Other System</a><span class="tag">DESKTOP</span></td><td class="num">141</td><td class="num">27.98%</td></tr>
                <tr><td><a href="#">Mac</a><span class="tag">DESKTOP</span></td><td class="num">87</td><td class="num">17.26%</td></tr>
                <tr><td><a href="#">iPhone</a><span class="tag">MOBILE</span></td><td class="num">44</td><td class="num">8.73%</td></tr>
                <tr><td><a href="#">Android Mobile</a><span class="tag">MOBILE</span></td><td class="num">29</td><td class="num">5.75%</td></tr>
                <tr><td><a href="#">iOS</a><span class="tag">TABLET</span></td><td class="num">4</td><td class="num">0.79%</td></tr>
                <tr><td><a href="#">Android</a><span class="tag">TABLET</span></td><td class="num">1</td><td class="num">0.2%</td></tr>
            </tbody>
        </table>
    </div>
</section>

</body>
</html>
```
FILE: styles.css
```css
* {
    box-sizing: border-box;
}
body {
    margin: 0;
    background-color: #fafafa;
    color: #1c1c1c;
    font-family: Inter, "Liberation Sans", sans-serif;
    font-size: 27px;
}
button, select {
    font: inherit;
    font-weight: 600;
    border: none;
    background: none;
    padding: 0;
    cursor: pointer;
}
h2 {
    margin: 0;
    font-size: 34px;
    line-height: 40px;
    font-weight: 600;
}
.sprite {
    position: absolute;
}
.section {
    margin: 0 51px 0 41px;
}
.map-section {
    margin: 0 45px 0 47px;
}
.table-section {
    margin: 0 39px 0 53px;
    padding-bottom: 18px;
}
.first-title {
    padding: 33px 0 27px;
}
.section-head {
    display: flex;
    align-items: center;
    height: 68px;
    margin: 50px 0 27px;
}
.hour-head {
    margin-top: 54px;
    margin-bottom: 28px;
}
.table-section h2 {
    padding-bottom: 4px;
}
.card {
    position: relative;
    border: 2px solid #e3e3e3;
    border-radius: 28px;
    background-color: #fff;
    overflow: hidden;
}
.icon {
    width: 26px;
    height: 26px;
    fill: none;
    stroke: currentColor;
    stroke-width: 3;
    stroke-linecap: round;
    stroke-linejoin: round;
}
.icon.globe {
    width: 28px;
    height: 28px;
}

/* toggle and export */
.toggle {
    display: flex;
    height: 68px;
    padding: 7px 6px;
    margin-left: 20px;
    border-radius: 20px;
    background-color: #f0f0f0;
}
.toggle button {
    display: flex;
    align-items: center;
    gap: 14px;
    padding: 0 14px;
    border-radius: 14px;
    color: #1c1c1c;
}
.toggle button + button {
    padding-left: 20px;
}
.toggle .active {
    background-color: #fff;
    color: #6557dc;
    box-shadow: 0 2px 4px rgba(0, 0, 0, .08);
}
.export {
    display: flex;
    align-items: center;
    gap: 14px;
    margin-left: auto;
    margin-right: 27px;
    color: #6557dc;
}

/* a/b test */
.ab {
    display: flex;
    height: 204px;
    color: #6b6b6b;
    font-size: 24px;
    line-height: 34px;
}
.ab-bars {
    width: 470px;
    display: grid;
    grid-template-columns: 142px 1fr;
    grid-auto-rows: 41px;
    align-content: start;
    align-items: center;
    column-gap: 28px;
    padding: 38px 54px 0 0;
    text-align: right;
}
.bar {
    height: 14px;
    border-radius: 7px;
    background-color: #f0f0f0;
    overflow: hidden;
}
.fill {
    height: 14px;
    border-radius: 7px;
}
.purple {
    background-color: #6557dc;
}
.red {
    background-color: #ff3b54;
}
.pink {
    background-color: #ee3f7d;
}
.green {
    background-color: #0e9a6e;
}
.ab-cell {
    flex: 1;
    display: flex;
    gap: 36px;
    padding: 44px 0 0 63px;
    border-left: 2px solid #efefef;
}
.ab-cell strong {
    display: block;
    color: #1c1c1c;
    font-size: 27px;
    line-height: 36px;
}
.ab-name {
    display: flex;
    align-items: center;
    height: 40px;
    gap: 12px;
    margin: -3px 0 4px;
}
.dot {
    flex: none;
    width: 10px;
    height: 10px;
    margin-top: 12px;
    border-radius: 50%;
}
.dot.high {
    margin-top: 6px;
}
.winner, .tag {
    height: 40px;
    line-height: 40px;
    padding: 0 13px;
    border-radius: 20px;
    background-color: #d9efe7;
    color: #1c1c1c;
    font-size: 24px;
}

/* opens by hour */
.chart {
    display: grid;
    grid-template-columns: 71px 1fr;
    grid-template-rows: 426px 1fr;
    height: 544px;
    padding: 45px 37px 0 0;
    color: #666;
    font-family: "Liberation Sans", sans-serif;
    font-size: 21px;
    line-height: 24px;
}
.y-axis {
    display: flex;
    flex-direction: column;
    justify-content: space-between;
    margin: -11px 5px -11px 0;
    text-align: right;
}
.plot {
    display: flex;
    justify-content: space-around;
    align-items: flex-end;
    padding-left: 13px;
    border-bottom: 2px solid #d5d5d5;
    background: linear-gradient(#e3e3e3, #e3e3e3) 13px 0 / 2px 100% no-repeat,
        linear-gradient(#e9e9e9, #e9e9e9) 0 0 / 100% 2px no-repeat,
        linear-gradient(#e9e9e9, #e9e9e9) 0 50% / 100% 2px no-repeat;
}
.plot i {
    width: 35px;
    height: 2px;
    margin-bottom: -2px;
    background-color: #bcb8dc;
}
.x-axis {
    grid-column: 2;
    display: flex;
    padding: 18px 0 0 13px;
}
.x-axis span {
    flex: 1;
    text-align: center;
}

/* map */
.world {
    display: block;
    width: 100%;
    height: auto;
}
.world path {
    fill: #dcd9f8;
    stroke: #c5c1df;
    stroke-width: 1.5px;
    stroke-linejoin: round;
    vector-effect: non-scaling-stroke;
}
.world .line, .world .disputed {
    fill: none;
}
.world .disputed {
    stroke: #cfcdcb;
}
.world .lake {
    fill: #fff;
}
.world .us path {
    fill: #6557dc;
    stroke: #bfbfc4;
}
.world .us .line {
    fill: none;
    stroke: #4a40a5;
}
.world .hot {
    fill: #6557dc;
    stroke: #5a4dcb;
}
.world .hottest {
    fill: #231b75;
    stroke: #1e1768;
}
.tooltip {
    position: absolute;
    left: 21%;
    top: 41.4%;
    padding: 11px 16px 9px 12px;
    border: 1px solid #ccc;
    background-color: #fff;
    color: #000;
    font-family: "Liberation Sans", sans-serif;
    font-size: 22px;
    line-height: 28px;
}

/* breakdown */
.picker {
    display: flex;
    align-items: center;
    gap: 20px;
    margin-left: 28px;
}
.picker select {
    appearance: none;
    color: #6557dc;
}
.chevron {
    width: 18px;
    height: 12px;
    fill: none;
    stroke: #6557dc;
    stroke-width: 3;
    stroke-linecap: round;
    stroke-linejoin: round;
}
table {
    width: 100%;
    border-collapse: collapse;
    table-layout: fixed;
}
th {
    height: 106px;
    padding: 0 41px;
    text-align: left;
    font-weight: 600;
    color: #6b6b6b;
}
th:nth-child(2) {
    width: 354px;
}
th:nth-child(3) {
    width: 529px;
}
td {
    height: 96px;
    padding: 0 41px;
    border-top: 2px solid #e3e3e3;
}
tr:nth-child(odd) td {
    height: 97px;
}
.num {
    text-align: right;
    padding-right: 82px;
}
th.sorted {
    color: #1c1c1c;
    font-weight: 700;
}
td a {
    color: #1c1c1c;
    text-underline-offset: 4px;
    text-decoration-thickness: 2px;
}
.tag {
    display: inline-block;
    margin-left: 27px;
    background-color: #e3e3e3;
}
```
